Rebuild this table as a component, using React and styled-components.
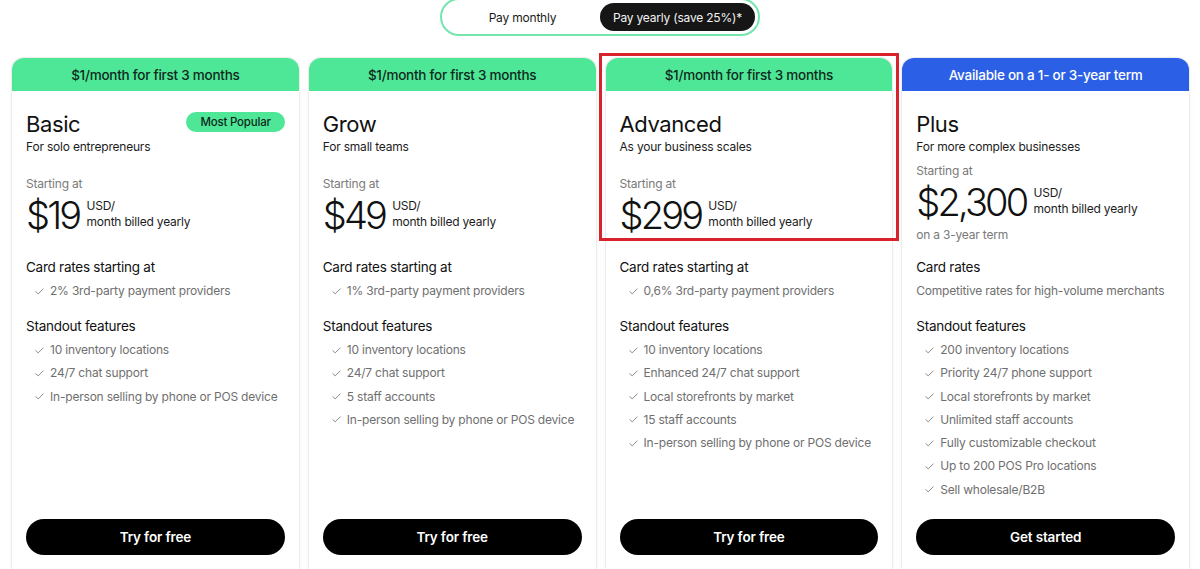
import styled, { createGlobalStyle } from "styled-components";

const GlobalStyle = createGlobalStyle`
  html, body {
    margin: 0;
    padding: 0;
    background: #ffffff;
    overflow: hidden;
  }
  body {
    font-family: Inter, "Noto Sans", "Liberation Sans", sans-serif;
    color: #121212;
    -webkit-font-smoothing: antialiased;
  }
`;

const Page = styled.div`
  width: 1200px;
  height: 569px;
  overflow: hidden;
`;

const ToggleWrap = styled.div`
  display: flex;
  justify-content: center;
`;

const Toggle = styled.div`
  display: grid;
  grid-template-columns: 155px 155px;
  padding: 3px;
  border: 2px solid #74e6ad;
  border-radius: 999px;
  margin-top: -2px;
`;

const ToggleOption = styled.div`
  height: 28px;
  display: flex;
  align-items: center;
  justify-content: center;
  border-radius: 999px;
  font-size: 12px;
  letter-spacing: -0.2px;
  background: ${(p) => (p.$active ? "#161616" : "transparent")};
  color: ${(p) => (p.$active ? "#f2f2f2" : "#1a1a1a")};
`;

const Cards = styled.div`
  display: grid;
  grid-template-columns: repeat(4, 1fr);
  gap: 10px;
  padding: 0 11px 0 12px;
  margin-top: 22px;
`;

const Card = styled.div`
  position: relative;
  display: flex;
  flex-direction: column;
  background: #fff;
  border-radius: 12px;
  box-shadow: 0 0 0 1px #ececec, 0 1px 6px rgba(0, 0, 0, 0.05);
`;

const Banner = styled.div`
  height: 33px;
  display: flex;
  align-items: center;
  justify-content: center;
  border-radius: 12px 12px 0 0;
  font-size: 13.5px;
  letter-spacing: -0.25px;
  font-weight: 500;
  background: ${(p) => (p.$blue ? "#2b5fe6" : "#4ee797")};
  color: ${(p) => (p.$blue ? "#ffffff" : "#0f2a1c")};
`;

const Body = styled.div`
  flex: 1;
  display: flex;
  flex-direction: column;
  padding: 19px 14px 24px;
`;

const TitleRow = styled.div`
  display: flex;
  justify-content: space-between;
  align-items: flex-start;
`;

const Title = styled.h2`
  margin: 0;
  font-size: 22px;
  line-height: 28px;
  font-weight: 400;
  letter-spacing: -0.4px;
  color: #111;
`;

const Badge = styled.span`
  margin-top: 2px;
  padding: 0 14px;
  height: 20px;
  display: inline-flex;
  align-items: center;
  border-radius: 999px;
  background: #4ee797;
  color: #10291b;
  font-size: 11.5px;
  letter-spacing: -0.2px;
  font-weight: 500;
`;

const Subtitle = styled.p`
  margin: 0;
  font-size: 12px;
  letter-spacing: -0.2px;
  line-height: 18px;
  color: #1c1c1c;
`;

const Pricing = styled.div`
  height: 101px;
  display: flex;
  flex-direction: column;
  justify-content: center;
`;

const Muted = styled.div`
  font-size: 12px;
  letter-spacing: -0.2px;
  line-height: 18px;
  color: #7a7a7a;
  margin-bottom: ${(p) => (p.$term ? "7px" : "0")};
`;

const PriceRow = styled.div`
  display: flex;
  align-items: flex-start;
  height: 46px;
`;

const Amount = styled.span`
  font-size: 38px;
  line-height: 44px;
  font-weight: 300;
  letter-spacing: -2.8px;
  color: #111;
  margin-right: 7px;
`;

const Unit = styled.div`
  padding-top: 5px;
  font-size: 12px;
  letter-spacing: -0.2px;
  line-height: 16px;
  color: #1c1c1c;
`;

const SectionTitle = styled.h3`
  margin: 0;
  font-size: 13.5px;
  letter-spacing: -0.25px;
  line-height: 20px;
  font-weight: 400;
  color: #111;
`;

const List = styled.ul`
  list-style: none;
  margin: 5px 0 0;
  padding: 0;
  display: flex;
  flex-direction: column;
  gap: 5.3px;
`;

const Item = styled.li`
  display: flex;
  align-items: center;
  gap: 6px;
  padding-left: ${(p) => (p.$plain ? "0" : "9px")};
  font-size: 12px;
  letter-spacing: -0.2px;
  line-height: 18px;
  color: #6f6f6f;
`;

const Section = styled.div`
  margin-top: ${(p) => p.$gap || 0}px;
`;

const Button = styled.button`
  margin-top: auto;
  height: 36px;
  width: 100%;
  border: none;
  border-radius: 18px;
  background: #000;
  color: #fff;
  font-family: inherit;
  font-size: 13.5px;
  letter-spacing: -0.15px;
  font-weight: 600;
`;

const Spacer = styled.div`
  height: 20px;
  flex: none;
`;

const Highlight = styled.div`
  position: absolute;
  top: -5px;
  left: -7px;
  right: -7px;
  height: 188px;
  border: 3px solid #d8232c;
  box-sizing: border-box;
  pointer-events: none;
`;

const Check = () => (
  <svg width="9" height="7" viewBox="0 0 9 7" fill="none" style={{ flex: "none" }}>
    <path d="M0.8 3.6 L3.2 5.9 L8.2 0.9" stroke="#8a8a8a" strokeWidth="1" strokeLinecap="round" strokeLinejoin="round" />
  </svg>
);

const plans = [
  {
    banner: "$1/month for first 3 months",
    name: "Basic",
    badge: "Most Popular",
    subtitle: "For solo entrepreneurs",
    price: "$19",
    rates: "2% 3rd-party payment providers",
    features: ["10 inventory locations", "24/7 chat support", "In-person selling by phone or POS device"],
    cta: "Try for free",
  },
  {
    banner: "$1/month for first 3 months",
    name: "Grow",
    subtitle: "For small teams",
    price: "$49",
    rates: "1% 3rd-party payment providers",
    features: ["10 inventory locations", "24/7 chat support", "5 staff accounts", "In-person selling by phone or POS device"],
    cta: "Try for free",
  },
  {
    banner: "$1/month for first 3 months",
    name: "Advanced",
    subtitle: "As your business scales",
    price: "$299",
    rates: "0,6% 3rd-party payment providers",
    features: [
      "10 inventory locations",
      "Enhanced 24/7 chat support",
      "Local storefronts by market",
      "15 staff accounts",
      "In-person selling by phone or POS device",
    ],
    cta: "Try for free",
    highlight: true,
  },
  {
    banner: "Available on a 1- or 3-year term",
    blue: true,
    name: "Plus",
    subtitle: "For more complex businesses",
    price: "$2,300",
    term: "on a 3-year term",
    ratesTitle: "Card rates",
    ratesPlain: "Competitive rates for high-volume merchants",
    features: [
      "200 inventory locations",
      "Priority 24/7 phone support",
      "Local storefronts by market",
      "Unlimited staff accounts",
      "Fully customizable checkout",
      "Up to 200 POS Pro locations",
      "Sell wholesale/B2B",
    ],
    cta: "Get started",
  },
];

const PlanCard = ({ plan }) => (
  <Card>
    <Banner $blue={plan.blue}>{plan.banner}</Banner>
    <Body>
      <TitleRow>
        <Title>{plan.name}</Title>
        {plan.badge && <Badge>{plan.badge}</Badge>}
      </TitleRow>
      <Subtitle>{plan.subtitle}</Subtitle>
      <Pricing>
        <Muted>Starting at</Muted>
        <PriceRow>
          <Amount>{plan.price}</Amount>
          <Unit>
            USD/
            <br />
            month billed yearly
          </Unit>
        </PriceRow>
        {plan.term && <Muted $term>{plan.term}</Muted>}
      </Pricing>
      <Section>
        <SectionTitle>{plan.ratesTitle || "Card rates starting at"}</SectionTitle>
        <List>
          {plan.ratesPlain ? (
            <Item $plain>{plan.ratesPlain}</Item>
          ) : (
            <Item>
              <Check />
              {plan.rates}
            </Item>
          )}
        </List>
      </Section>
      <Section $gap={16}>
        <SectionTitle>Standout features</SectionTitle>
        <List>
          {plan.features.map((f) => (
            <Item key={f}>
              <Check />
              {f}
            </Item>
          ))}
        </List>
      </Section>
      <Spacer />
      <Button>{plan.cta}</Button>
    </Body>
    {plan.highlight && <Highlight />}
  </Card>
);

export default function App() {
  return (
    <Page>
      <GlobalStyle />
      <ToggleWrap>
        <Toggle>
          <ToggleOption>Pay monthly</ToggleOption>
          <ToggleOption $active>Pay yearly (save 25%)*</ToggleOption>
        </Toggle>
      </ToggleWrap>
      <Cards>
        {plans.map((p) => (
          <PlanCard key={p.name} plan={p} />
        ))}
      </Cards>
    </Page>
  );
}
